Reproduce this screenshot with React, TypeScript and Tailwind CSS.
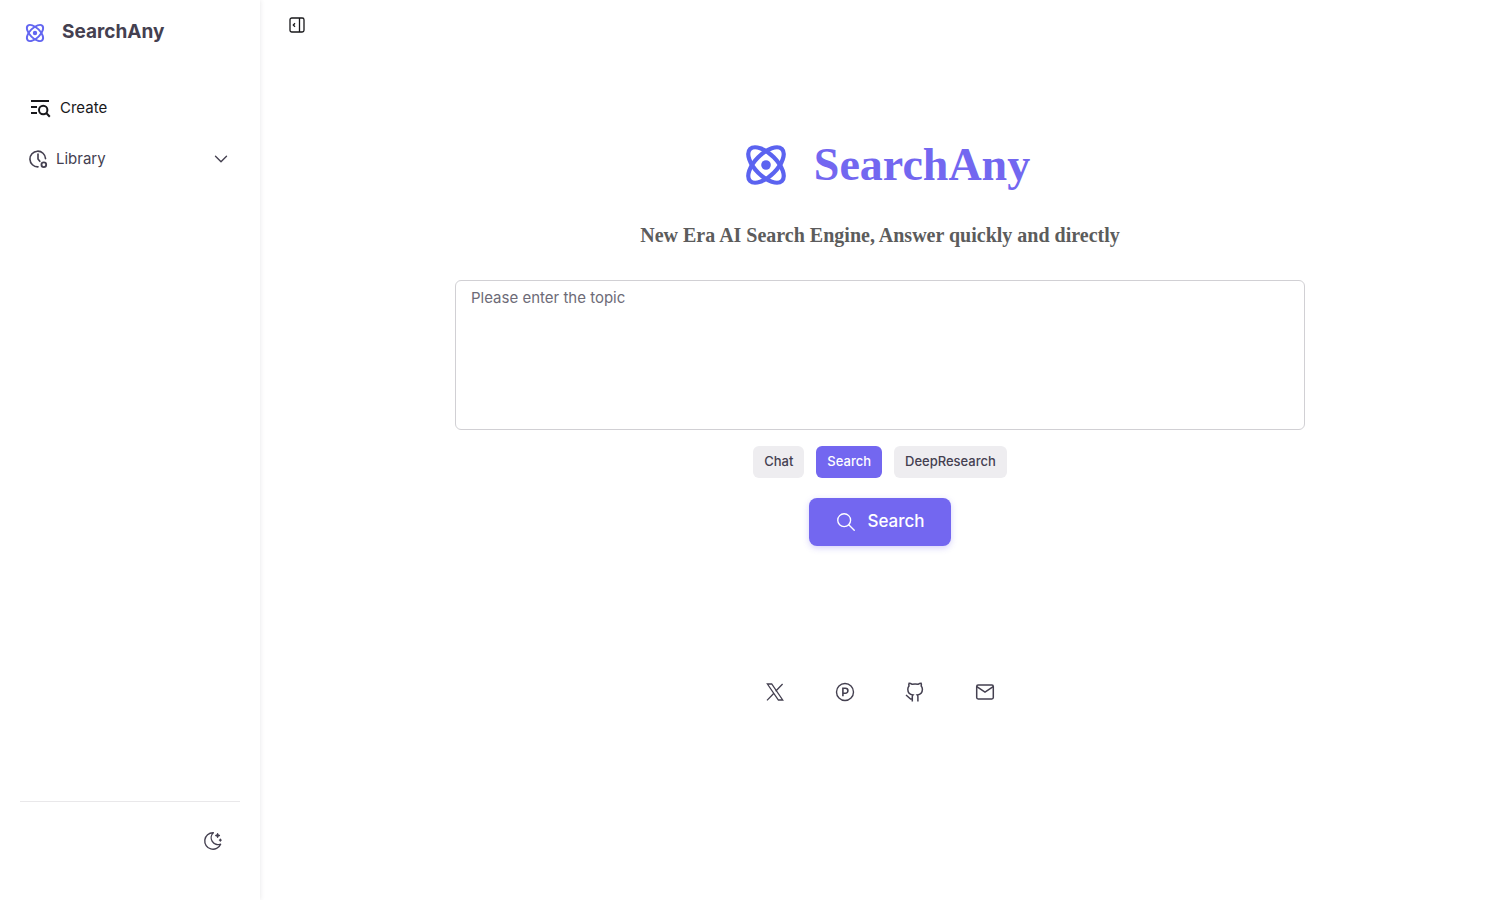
import { useState } from "react";
import { TbChevronDown, TbMoonStars, TbSearch } from "react-icons/tb";

interface IconProps {
  className?: string;
}

const modes = ["Chat", "Search", "DeepResearch"];

function Logo({ className }: IconProps) {
  return (
    <svg viewBox="0 0 48 48" fill="none" stroke="currentColor" strokeWidth="4.2" className={className} aria-hidden="true">
      <ellipse cx="24" cy="24" rx="22.5" ry="11" transform="rotate(45 24 24)" />
      <ellipse cx="24" cy="24" rx="22.5" ry="11" transform="rotate(-45 24 24)" />
      <circle cx="24" cy="24" r="4.8" fill="currentColor" stroke="none" />
    </svg>
  );
}

function CreateIcon({ className }: IconProps) {
  return (
    <svg viewBox="0 0 24 24" fill="none" stroke="currentColor" strokeWidth="2" className={className} aria-hidden="true">
      <path d="M3 5h18M3 11h6M3 17h6" />
      <circle cx="15.2" cy="14" r="4.2" />
      <path d="m18.2 17 3.6 3.8" />
    </svg>
  );
}

function LibraryIcon({ className }: IconProps) {
  return (
    <svg viewBox="0 0 22 22" fill="none" stroke="currentColor" strokeWidth="1.8" className={className} aria-hidden="true">
      <path d="M19.3 10.6A8.6 8.6 0 1 0 11 19.6" strokeLinecap="round" />
      <path d="M11 5.5V11l2 2.6" strokeLinecap="round" />
      <circle cx="17.4" cy="17.4" r="2.6" strokeWidth="2" />
    </svg>
  );
}

function SidebarIcon({ className }: IconProps) {
  return (
    <svg viewBox="0 0 18 18" fill="none" stroke="currentColor" strokeWidth="1.3" className={className} aria-hidden="true">
      <rect x="2" y="2" width="14" height="14" rx="1.8" />
      <path d="M11.5 2v14M7 7.2 5.3 9 7 10.8" />
    </svg>
  );
}

function XIcon({ className }: IconProps) {
  return (
    <svg viewBox="0 0 22 22" fill="none" stroke="currentColor" strokeWidth="1.3" className={className} aria-hidden="true">
      <path d="M3.4 3h4.3l11 16h-4.3zM18.6 3l-7 7.3M9.9 12.2 3 19.4" />
    </svg>
  );
}

function ProductHuntIcon({ className }: IconProps) {
  return (
    <svg viewBox="0 0 22 22" fill="none" stroke="currentColor" strokeWidth="1.4" className={className} aria-hidden="true">
      <circle cx="11" cy="11" r="8.5" />
      <path d="M8.9 15.3V7.2h2.5a2.5 2.5 0 0 1 0 5H8.9" strokeWidth="1.6" />
    </svg>
  );
}

function GithubIcon({ className }: IconProps) {
  return (
    <svg viewBox="0 0 22 22" fill="none" stroke="currentColor" strokeWidth="1.5" className={className} aria-hidden="true">
      <path d="M8.3 20.4v-4.6c0-.9.2-1.4.7-1.9-2.8-.4-5.2-1.7-5.2-5.7 0-1.3.4-2.4 1.2-3.3-.3-.8-.3-1.8.1-2.7 1.2 0 2.1.4 3.1 1.1 1.9-.4 3.9-.4 5.8 0 1-.7 1.9-1.1 3.1-1.1.4.9.4 1.9.1 2.7.8.9 1.2 2 1.2 3.3 0 4-2.4 5.3-5.2 5.7.5.5.7 1 .7 1.9v4.6" />
      <path d="M8.3 18H6.6L2 14" />
    </svg>
  );
}

function MailIcon({ className }: IconProps) {
  return (
    <svg viewBox="0 0 22 22" fill="none" stroke="currentColor" strokeWidth="1.5" className={className} aria-hidden="true">
      <rect x="2.7" y="4" width="16.6" height="14" rx="1.4" />
      <path d="m2.8 5.6 8.2 5.6 8.2-5.6" />
    </svg>
  );
}

function Sidebar() {
  return (
    <aside className="z-10 flex w-[260px] shrink-0 flex-col bg-white shadow-[0_0_5px_rgba(47,43,61,0.12)]">
      <div className="flex h-[65px] items-center gap-4 pl-6">
        <Logo className="size-[22px] text-[#6366f1]" />
        <span className="text-[19px] font-bold text-[#444050]">SearchAny</span>
      </div>
      <nav className="flex flex-col gap-[11px] px-5 pt-[23px]">
        <a href="#create" className="flex h-10 items-center gap-2 pl-2 text-[15px] text-[#18181b]">
          <CreateIcon className="size-6" />
          Create
        </a>
        <button type="button" className="flex h-10 items-center gap-2 pr-2 pl-2 text-[15px] text-[#444050]">
          <LibraryIcon className="size-5" />
          Library
          <TbChevronDown size={22} strokeWidth={1.5} className="ml-auto" />
        </button>
      </nav>
      <div className="mx-5 mt-auto flex h-[99px] items-start justify-end border-t border-[#e9e8ea] pt-7 pr-4">
        <button type="button" aria-label="Toggle theme" className="text-[#444050]">
          <TbMoonStars size={22} strokeWidth={1.5} />
        </button>
      </div>
    </aside>
  );
}

export default function App() {
  const [mode, setMode] = useState("Search");
  return (
    <div className="flex min-h-screen bg-white font-['Inter',sans-serif] text-[#444050]">
      <Sidebar />
      <main className="flex min-w-0 flex-1 flex-col">
        <header className="flex h-[50px] items-center px-7">
          <button type="button" aria-label="Toggle sidebar" className="text-[#18181b]">
            <SidebarIcon className="size-[18px]" />
          </button>
        </header>
        <div className="mx-auto flex w-full max-w-[898px] flex-col items-center px-6 pt-[79px] font-['Liberation_Serif',serif]">
          <div className="flex items-center gap-6 pl-3">
            <Logo className="size-12 text-[#5b63f0]" />
            <h1 className="text-[46px] leading-[72px] font-bold text-[#7367f0]">SearchAny</h1>
          </div>
          <h2 className="mt-5 text-xl leading-7 font-bold text-[#5c5c5c]">
            New Era AI Search Engine, Answer quickly and directly
          </h2>
        </div>
        <form
          className="mx-auto flex w-full max-w-[898px] flex-col items-center px-6 pt-[31px]"
          onSubmit={(e) => e.preventDefault()}
        >
          <textarea
            aria-label="Topic"
            placeholder="Please enter the topic"
            className="h-[150px] w-full resize-none rounded-md border border-[#d1d0d4] px-[15px] py-[5px] text-[15px] leading-6 outline-none placeholder:text-[#6d6b77]"
          />
          <div className="mt-4 flex gap-3">
            {modes.map((item) => (
              <button
                key={item}
                type="button"
                onClick={() => setMode(item)}
                className={
                  item === mode
                    ? "h-8 rounded-md bg-[#7367f0] px-[11px] text-[13px] font-medium text-white"
                    : "h-8 rounded-md bg-[#eeedf0] px-[11px] text-[13px] font-medium text-[#444050]"
                }
              >
                {item}
              </button>
            ))}
          </div>
          <button
            type="submit"
            className="mt-5 flex h-12 items-center gap-2.5 rounded-lg bg-[#7367f0] px-[26px] text-[17px] font-medium text-white shadow-[0_2px_6px_rgba(115,103,240,0.3)]"
          >
            <TbSearch size={22} strokeWidth={1.5} />
            Search
          </button>
        </form>
        <footer className="flex justify-center gap-12 pt-[135px] pb-8">
          <a href="#x" aria-label="X">
            <XIcon className="size-[22px]" />
          </a>
          <a href="#producthunt" aria-label="Product Hunt">
            <ProductHuntIcon className="size-[22px]" />
          </a>
          <a href="#github" aria-label="GitHub">
            <GithubIcon className="size-[22px]" />
          </a>
          <a href="#mail" aria-label="Email">
            <MailIcon className="size-[22px]" />
          </a>
        </footer>
      </main>
    </div>
  );
}
